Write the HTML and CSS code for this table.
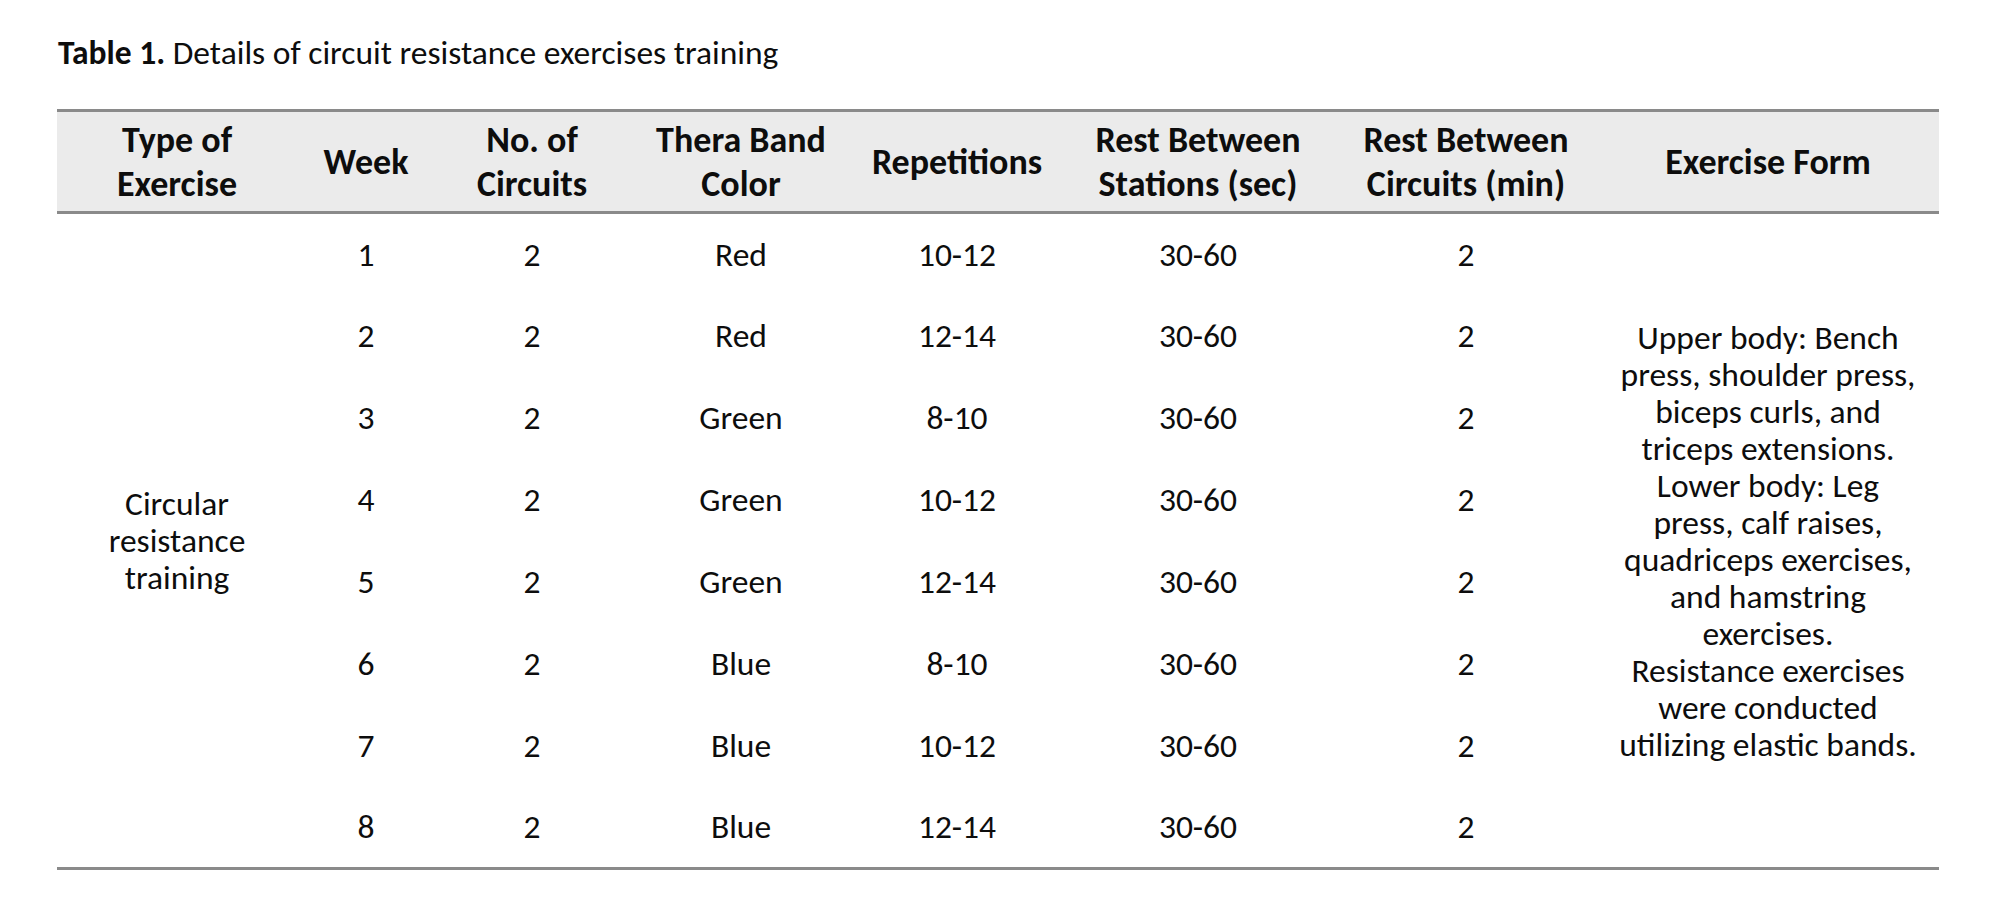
FILE: index.html
```html
<!DOCTYPE html>
<html lang="en">
<head>
<meta charset="utf-8">
<title>Table 1</title>
<link rel="stylesheet" href="styles.css">
</head>
<body>
<div class="page">
  <p class="caption"><b>Table 1.</b> Details of circuit resistance exercises training</p>
  <table class="data">
    <colgroup>
      <col class="c1"><col class="c2"><col class="c3"><col class="c4">
      <col class="c5"><col class="c6"><col class="c7"><col class="c8">
    </colgroup>
    <thead>
      <tr>
        <th>Type of<br>Exercise</th>
        <th>Week</th>
        <th>No. of<br>Circuits</th>
        <th>Thera Band<br>Color</th>
        <th>Repetitions</th>
        <th>Rest Between<br>Stations (sec)</th>
        <th>Rest Between<br>Circuits (min)</th>
        <th>Exercise Form</th>
      </tr>
    </thead>
    <tbody>
      <tr>
        <td rowspan="8" class="multi">Circular<br>resistance<br>training</td>
        <td>1</td><td>2</td><td>Red</td><td>10-12</td><td>30-60</td><td>2</td>
        <td rowspan="8" class="multi">Upper body: Bench<br>press, shoulder press,<br>biceps curls, and<br>triceps extensions.<br>Lower body: Leg<br>press, calf raises,<br>quadriceps exercises,<br>and hamstring<br>exercises.<br>Resistance exercises<br>were conducted<br>utilizing elastic bands.</td>
      </tr>
      <tr><td>2</td><td>2</td><td>Red</td><td>12-14</td><td>30-60</td><td>2</td></tr>
      <tr><td>3</td><td>2</td><td>Green</td><td>8-10</td><td>30-60</td><td>2</td></tr>
      <tr><td>4</td><td>2</td><td>Green</td><td>10-12</td><td>30-60</td><td>2</td></tr>
      <tr><td>5</td><td>2</td><td>Green</td><td>12-14</td><td>30-60</td><td>2</td></tr>
      <tr><td>6</td><td>2</td><td>Blue</td><td>8-10</td><td>30-60</td><td>2</td></tr>
      <tr><td>7</td><td>2</td><td>Blue</td><td>10-12</td><td>30-60</td><td>2</td></tr>
      <tr><td>8</td><td>2</td><td>Blue</td><td>12-14</td><td>30-60</td><td>2</td></tr>
    </tbody>
  </table>
</div>
</body>
</html>
```

FILE: styles.css
```css
html, body {
  margin: 0;
  padding: 0;
  background: #ffffff;
}

body {
  font-family: Carlito, Lato, "Open Sans", sans-serif;
  color: #0d0d0d;
}

.page {
  padding: 35px 0 0 57px;
  width: 1882px;
}

.caption {
  margin: 0 0 38px 1px;
  font-size: 33.5px;
  line-height: 36px;
}

.caption b {
  font-weight: 700;
}

.data {
  width: 1882px;
  border-collapse: collapse;
  table-layout: fixed;
  font-size: 33.5px;
}

.c1 { width: 240px; }
.c2 { width: 138px; }
.c3 { width: 194px; }
.c4 { width: 224px; }
.c5 { width: 208px; }
.c6 { width: 274px; }
.c7 { width: 262px; }
.c8 { width: 342px; }

.data thead tr {
  background: #ebebeb;
  height: 102px;
}

.data thead th {
  border-top: 3px solid #8a8a8a;
  border-bottom: 3px solid #8a8a8a;
  font-size: 36px;
  font-weight: 700;
  line-height: 44px;
  text-align: center;
  vertical-align: middle;
  padding: 0;
}

.data tbody tr {
  height: 82px;
}

.data tbody td {
  text-align: center;
  vertical-align: middle;
  padding: 0;
  line-height: 37px;
}

.data tbody tr:last-child td,
.data tbody td.multi {
  border-bottom: 3px solid #8a8a8a;
}
```
